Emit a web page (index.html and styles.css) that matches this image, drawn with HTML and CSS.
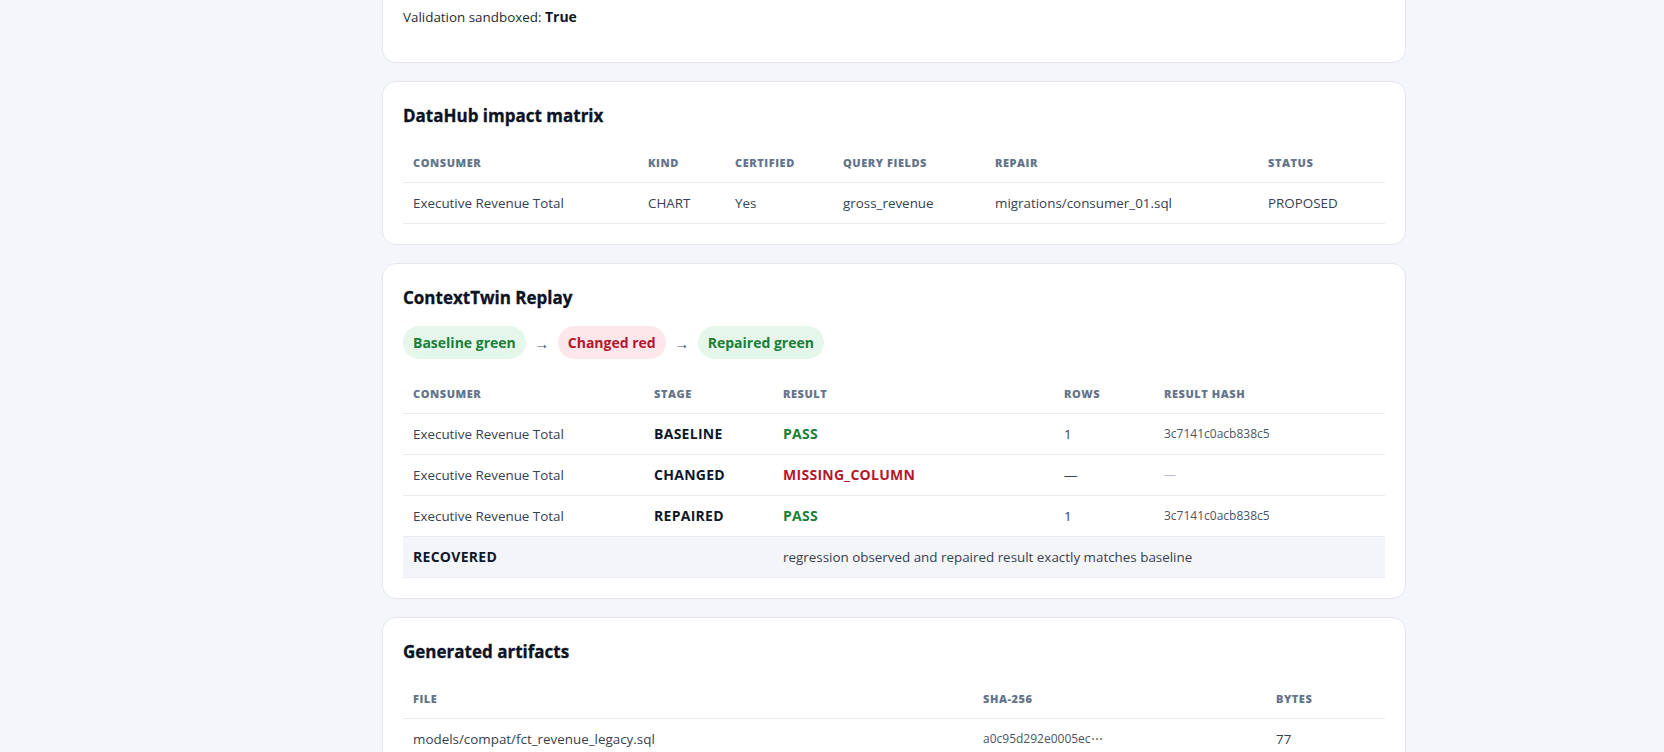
FILE: index.html
```html
<!DOCTYPE html>
<html lang="en">
<head>
<meta charset="utf-8">
<title>Compatibility report</title>
<link rel="stylesheet" href="styles.css">
</head>
<body>
<main class="page">
  <section class="card card-clipped">
    <p class="meta">Validation sandboxed: <strong>True</strong></p>
  </section>

  <section class="card">
    <h2>DataHub impact matrix</h2>
    <table class="grid">
      <colgroup>
        <col class="c-235"><col class="c-87"><col class="c-108"><col class="c-152"><col class="c-273"><col>
      </colgroup>
      <thead>
        <tr><th>Consumer</th><th>Kind</th><th>Certified</th><th>Query fields</th><th>Repair</th><th>Status</th></tr>
      </thead>
      <tbody>
        <tr><td>Executive Revenue Total</td><td>CHART</td><td>Yes</td><td>gross_revenue</td><td>migrations/consumer_01.sql</td><td>PROPOSED</td></tr>
      </tbody>
    </table>
  </section>

  <section class="card">
    <h2>ContextTwin Replay</h2>
    <div class="flow">
      <span class="pill pill-green">Baseline green</span>
      <span class="arrow">→</span>
      <span class="pill pill-red">Changed red</span>
      <span class="arrow">→</span>
      <span class="pill pill-green">Repaired green</span>
    </div>
    <table class="grid">
      <colgroup>
        <col class="c-241"><col class="c-129"><col class="c-281"><col class="c-100"><col>
      </colgroup>
      <thead>
        <tr><th>Consumer</th><th>Stage</th><th>Result</th><th>Rows</th><th>Result hash</th></tr>
      </thead>
      <tbody>
        <tr><td>Executive Revenue Total</td><td class="stage">BASELINE</td><td class="ok">PASS</td><td>1</td><td class="hash">3c7141c0acb838c5</td></tr>
        <tr><td>Executive Revenue Total</td><td class="stage">CHANGED</td><td class="bad">MISSING_COLUMN</td><td>—</td><td class="hash muted">—</td></tr>
        <tr><td>Executive Revenue Total</td><td class="stage">REPAIRED</td><td class="ok">PASS</td><td>1</td><td class="hash">3c7141c0acb838c5</td></tr>
        <tr class="summary"><td colspan="2" class="stage">RECOVERED</td><td colspan="3">regression observed and repaired result exactly matches baseline</td></tr>
      </tbody>
    </table>
  </section>

  <section class="card">
    <h2>Generated artifacts</h2>
    <table class="grid">
      <colgroup>
        <col class="c-570"><col class="c-293"><col>
      </colgroup>
      <thead>
        <tr><th>File</th><th>SHA-256</th><th>Bytes</th></tr>
      </thead>
      <tbody>
        <tr><td>models/compat/fct_revenue_legacy.sql</td><td class="hash">a0c95d292e0005ec⋯</td><td>77</td></tr>
      </tbody>
    </table>
  </section>
</main>
</body>
</html>
```

FILE: styles.css
```css
* { box-sizing: border-box; }

html, body {
  margin: 0;
  background: #f4f6f9;
}

body {
  font-family: "Open Sans", "Noto Sans", sans-serif;
  color: #374151;
  font-size: 13.4px;
}

.page {
  width: 1024px;
  margin-left: 382px;
  display: flex;
  flex-direction: column;
  gap: 18px;
  padding-bottom: 20px;
}

.card {
  background: #ffffff;
  border: 1px solid #e5e8ee;
  border-radius: 14px;
  padding: 20px;
}

.card-clipped {
  border-top: none;
  border-radius: 0 0 14px 14px;
  padding-top: 6px;
}

.meta {
  margin: 0 0 14px;
  line-height: 22px;
  font-size: 13.4px;
  color: #1f2937;
}

.meta strong {
  font-size: 14px;
  color: #0f172a;
  font-weight: 700;
}

.card h2 {
  margin: 0 0 14px;
  font-size: 17px;
  line-height: 28px;
  font-weight: 700;
  color: #0b1324;
  -webkit-text-stroke: 0.3px #0b1324;
}

.flow {
  display: flex;
  align-items: center;
  gap: 8.5px;
  margin-bottom: 16px;
}

.pill {
  display: inline-block;
  padding: 7px 10px;
  border-radius: 999px;
  font-weight: 700;
  font-size: 14px;
  line-height: 19px;
}

.pill-green {
  background: #e5f6ea;
  color: #1a7f37;
}

.pill-red {
  background: #fde7ea;
  color: #b4182d;
}

.arrow {
  color: #475569;
  font-size: 15px;
}

.grid {
  width: 100%;
  border-collapse: collapse;
  table-layout: fixed;
}

.c-235 { width: 235px; }
.c-87 { width: 87px; }
.c-108 { width: 108px; }
.c-152 { width: 152px; }
.c-273 { width: 273px; }
.c-241 { width: 241px; }
.c-129 { width: 129px; }
.c-281 { width: 281px; }
.c-100 { width: 100px; }
.c-570 { width: 570px; }
.c-293 { width: 293px; }

.grid th {
  text-align: left;
  padding: 10px;
  font-size: 11px;
  line-height: 18px;
  font-weight: 800;
  letter-spacing: 0.05em;
  text-transform: uppercase;
  color: #64748b;
  border-bottom: 1px solid #e8ebf0;
}

.grid td {
  padding: 11px 10px;
  line-height: 18px;
  font-size: 13.4px;
  color: #374151;
  border-bottom: 1px solid #e8ebf0;
  white-space: nowrap;
}

.grid td.stage {
  font-size: 14px;
  font-weight: 700;
  color: #0f172a;
  letter-spacing: 0.02em;
}

.grid td.ok {
  font-size: 14px;
  font-weight: 700;
  color: #1a7f37;
  letter-spacing: 0.02em;
}

.grid td.bad {
  font-size: 14px;
  font-weight: 700;
  color: #b4182d;
  letter-spacing: 0.02em;
}

.grid td.hash {
  font-size: 12px;
  color: #4b5563;
}

.grid td.muted {
  color: #b6bcc6;
}

.grid tr.summary td {
  background: #f3f5f8;
}
```
